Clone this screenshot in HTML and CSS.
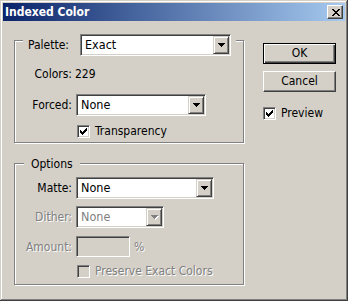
FILE: index.html
```html
<!DOCTYPE html>
<html lang="en">
<head>
    <meta charset="UTF-8">
    <title>Indexed Color</title>
    <link rel="stylesheet" href="styles.css">
</head>
<body>
    <div class="window">
        <div class="titlebar">
            <span class="title">Indexed Color</span>
            <span class="close-btn">
                <svg width="8" height="7" viewBox="0 0 8 7" shape-rendering="crispEdges">
                    <path d="M0 0h2v1h-2z M6 0h2v1h-2z M1 1h2v1h-2z M5 1h2v1h-2z M2 2h4v1h-4z M3 3h2v1h-2z M2 4h4v1h-4z M1 5h2v1h-2z M5 5h2v1h-2z M0 6h2v1h-2z M6 6h2v1h-2z" fill="#000"/>
                </svg>
            </span>
        </div>

        <div class="content">
            <div class="left">
                <!-- Palette group -->
                <div class="group">
                    <div class="group-head head-palette">
                        <span class="head-label">Palette:</span>
                        <div class="combo combo-palette">
                            <span class="combo-text">Exact</span>
                            <span class="combo-arrow"><svg width="7" height="4" viewBox="0 0 7 4" shape-rendering="crispEdges"><path d="M0 0h7v1h-1v1h-1v1h-1v1h-1v-1h-1v-1h-1v-1h-1z" fill="#000"/></svg></span>
                        </div>
                    </div>
                    <div class="row row-colors">
                        <span class="label">Colors:</span>
                        <span class="value">229</span>
                    </div>
                    <div class="row row-forced">
                        <span class="label">Forced:</span>
                        <div class="combo combo-forced">
                            <span class="combo-text">None</span>
                            <span class="combo-arrow"><svg width="7" height="4" viewBox="0 0 7 4" shape-rendering="crispEdges"><path d="M0 0h7v1h-1v1h-1v1h-1v1h-1v-1h-1v-1h-1v-1h-1z" fill="#000"/></svg></span>
                        </div>
                    </div>
                    <div class="row row-check">
                        <span></span>
                        <span class="check">
                            <span class="box"><svg width="7" height="7" viewBox="0 0 7 7" shape-rendering="crispEdges"><path d="M0 2h1v3h-1z M1 3h1v3h-1z M2 4h1v3h-1z M3 3h1v3h-1z M4 2h1v3h-1z M5 1h1v3h-1z M6 0h1v3h-1z" fill="#000"/></svg></span>
                            Transparency
                        </span>
                    </div>
                </div>

                <!-- Options group -->
                <div class="group group-options">
                    <div class="group-head head-options">Options</div>
                    <div class="row row-matte">
                        <span class="label">Matte:</span>
                        <div class="combo combo-matte">
                            <span class="combo-text">None</span>
                            <span class="combo-arrow"><svg width="7" height="4" viewBox="0 0 7 4" shape-rendering="crispEdges"><path d="M0 0h7v1h-1v1h-1v1h-1v1h-1v-1h-1v-1h-1v-1h-1z" fill="#000"/></svg></span>
                        </div>
                    </div>
                    <div class="row row-dither disabled">
                        <span class="label">Dither:</span>
                        <div class="combo combo-dither">
                            <span class="combo-text">None</span>
                            <span class="combo-arrow"><svg width="8" height="5" viewBox="0 0 8 5" shape-rendering="crispEdges"><path d="M1 1h7v1h-1v1h-1v1h-1v1h-1v-1h-1v-1h-1v-1h-1z" fill="#fff"/><path d="M0 0h7v1h-1v1h-1v1h-1v1h-1v-1h-1v-1h-1v-1h-1z" fill="#808080"/></svg></span>
                        </div>
                    </div>
                    <div class="row row-amount disabled">
                        <span class="label">Amount:</span>
                        <div class="amount-wrap">
                            <span class="field"></span>
                            <span class="unit">%</span>
                        </div>
                    </div>
                    <div class="row row-preserve disabled">
                        <span></span>
                        <span class="check">
                            <span class="box box-off"></span>
                            Preserve Exact Colors
                        </span>
                    </div>
                </div>
            </div>

            <div class="right">
                <div class="btn btn-default">OK</div>
                <div class="btn">Cancel</div>
                <span class="check check-preview">
                    <span class="box"><svg width="7" height="7" viewBox="0 0 7 7" shape-rendering="crispEdges"><path d="M0 2h1v3h-1z M1 3h1v3h-1z M2 4h1v3h-1z M3 3h1v3h-1z M4 2h1v3h-1z M5 1h1v3h-1z M6 0h1v3h-1z" fill="#000"/></svg></span>
                    Preview
                </span>
            </div>
        </div>
    </div>
</body>
</html>
```

FILE: styles.css
```css
body {
    margin: 0;
    background-color: #d4d0c8;
    font-family: 'DejaVu Sans Condensed', 'DejaVu Sans', 'Liberation Sans', sans-serif;
    font-stretch: semi-condensed;
    font-size: 12px;
    color: #000;
}

.window {
    width: 348px;
    height: 301px;
    box-sizing: border-box;
    padding: 3px;
    background-color: #d4d0c8;
    box-shadow: inset -1px -1px #404040, inset 1px 1px #d4d0c8,
                inset -2px -2px #808080, inset 2px 2px #fff;
}

/* Title bar */
.titlebar {
    height: 18px;
    display: flex;
    align-items: center;
    justify-content: space-between;
    padding-left: 2px;
    background: linear-gradient(to right, #0a246a, #a6caf0);
}

.title {
    color: #fff;
    font-weight: bold;
    font-size: 12px;
}

.close-btn {
    width: 16px;
    height: 14px;
    box-sizing: border-box;
    margin-right: 2px;
    display: flex;
    align-items: center;
    justify-content: center;
    padding: 0 0 0 1px;
    background-color: #d4d0c8;
    border: 1px solid;
    border-color: #fff #404040 #404040 #fff;
    box-shadow: inset -1px -1px #808080;
}

.close-btn svg {
    display: block;
}

/* Main area */
.content {
    display: flex;
    padding-left: 11px;
}

.left {
    width: 231px;
    padding-top: 19px;
}

.right {
    display: flex;
    flex-direction: column;
    align-items: flex-start;
    gap: 7px;
    margin-left: 18px;
    padding-top: 22px;
}

/* Etched group box */
.group {
    width: 230px;
    box-sizing: border-box;
    border: 1px solid #808080;
    box-shadow: inset 1px 1px #fff, 1px 1px #fff;
    padding-bottom: 4px;
}

.group-options {
    margin-top: 20px;
    padding-bottom: 6px;
}

.group-head {
    width: fit-content;
    background-color: #d4d0c8;
    margin-top: -7px;
}

.head-palette {
    display: flex;
    align-items: center;
    margin-left: 8px;
    padding: 0 5px;
}

.head-label {
    width: 52px;
}

.head-options {
    margin-left: 9px;
    padding: 0 7px;
    line-height: 14px;
}

/* Label / control rows */
.row {
    display: grid;
    grid-template-columns: 57px auto;
    column-gap: 4px;
    align-items: center;
}

.label {
    text-align: right;
    white-space: nowrap;
}

.row-colors {
    margin-top: 11px;
    line-height: 14px;
}

.row-colors .value {
    margin-left: -1px;
}

.row-forced { margin-top: 13px; }
.row-check { margin-top: 9px; }
.row-matte { margin-top: 6px; }
.row-dither { margin-top: 7px; }
.row-amount { margin-top: 8px; }
.row-preserve { margin-top: 8px; }

.disabled {
    color: #808080;
    text-shadow: 1px 1px #fff;
}

/* Combo boxes */
.combo {
    height: 22px;
    box-sizing: border-box;
    display: flex;
    padding: 1px;
    background-color: #fff;
    border: 1px solid;
    border-color: #808080 #fff #fff #808080;
    box-shadow: inset 1px 1px #404040, inset -1px -1px #d4d0c8;
}

.combo-palette { width: 151px; }
.combo-forced { width: 130px; }
.combo-matte { width: 138px; }
.combo-dither { width: 88px; }

.combo-text {
    flex: 1;
    padding-left: 3px;
    line-height: 18px;
    font-size: 12.5px;
}

.combo-arrow {
    width: 16px;
    height: 18px;
    box-sizing: border-box;
    display: flex;
    align-items: center;
    justify-content: center;
    background-color: #d4d0c8;
    border: 1px solid;
    border-color: #d4d0c8 #404040 #404040 #d4d0c8;
    box-shadow: inset 1px 1px #fff, inset -1px -1px #808080;
}

.combo-dither .combo-arrow svg {
    margin: 1px 0 0 1px;
}

/* Amount field */
.amount-wrap {
    display: flex;
    align-items: center;
    gap: 4px;
}

.field {
    width: 54px;
    height: 21px;
    box-sizing: border-box;
    border: 1px solid;
    border-color: #808080 #fff #fff #808080;
    box-shadow: inset 1px 1px #404040, inset -1px -1px #d4d0c8;
}

/* Checkboxes */
.check {
    display: flex;
    align-items: center;
    gap: 5px;
    margin-left: 1px;
    line-height: 13px;
    white-space: nowrap;
}

.box {
    width: 13px;
    height: 13px;
    flex: none;
    box-sizing: border-box;
    display: flex;
    align-items: center;
    justify-content: center;
    background-color: #fff;
    border: 1px solid;
    border-color: #808080 #fff #fff #808080;
    box-shadow: inset 1px 1px #404040, inset -1px -1px #d4d0c8;
}

.box-off {
    background-color: #d4d0c8;
}

.check-preview {
    margin: 8px 0 0 0;
}

/* Push buttons */
.btn {
    width: 73px;
    height: 21px;
    box-sizing: border-box;
    text-align: center;
    line-height: 19px;
    border: 1px solid;
    border-color: #fff #404040 #404040 #fff;
    box-shadow: inset -1px -1px #808080;
}

.btn-default {
    border-color: #000;
    box-shadow: inset 1px 1px #fff, inset -1px -1px #404040, inset -2px -2px #808080;
}
```
